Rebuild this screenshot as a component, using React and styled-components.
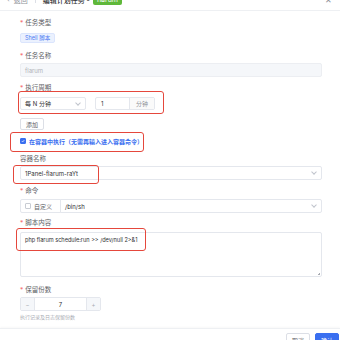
import React from 'react';
import styled, { createGlobalStyle } from 'styled-components';

const GlobalStyle = createGlobalStyle`
  html, body {
    margin: 0;
    padding: 0;
    background: #ffffff;
  }
  body {
    font-family: Inter, "Noto Sans CJK SC", "Liberation Sans", sans-serif;
    color: #303133;
  }
`;

const Drawer = styled.div`
  width: 340px;
  height: 340px;
  overflow: hidden;
  position: relative;
  background: #fff;
`;

const Header = styled.div`
  height: 22px;
  margin-top: -11px;
  box-sizing: border-box;
  border-bottom: 1px solid #eef0f3;
  display: flex;
  align-items: center;
  padding: 0 8px 0 7px;
  font-size: 7px;
`;

const Back = styled.span`
  color: #909399;
  display: flex;
  align-items: center;
  gap: 4px;
`;

const Divider = styled.span`
  width: 1px;
  height: 7px;
  background: #dcdfe6;
  margin: 0 7px;
`;

const Title = styled.span`
  color: #303133;
  font-weight: 500;
`;

const GreenTag = styled.span`
  margin-left: 3px;
  background: #5fb83a;
  color: #fff;
  border-radius: 2px;
  padding: 1px 4px;
  font-size: 7px;
`;

const Close = styled.span`
  margin-left: auto;
  color: #909399;
  font-size: 8px;
`;

const Body = styled.div`
  position: relative;
  padding: 8px 18px 0 20px;
  height: 317px;
  box-sizing: border-box;
`;

const Label = styled.div`
  height: 8px;
  line-height: 8px;
  font-size: 6.5px;
  color: #606266;
  margin-top: ${p => p.$mt || 0}px;
  &::before {
    content: ${p => (p.$req ? '"*"' : '""')};
    color: #f56c6c;
    margin-right: ${p => (p.$req ? 2 : 0)}px;
  }
`;

const TypeTag = styled.div`
  display: flex;
  width: fit-content;
  align-items: center;
  height: 10px;
  box-sizing: border-box;
  margin-top: 6px;
  padding: 0 4px;
  border-radius: 2px;
  background: #ebf1fe;
  border: 1px solid #dbe5fd;
  color: #4d7bf3;
  font-size: 5.5px;
`;

const Input = styled.div`
  height: ${p => p.$h || 14}px;
  margin-top: ${p => p.$mt ?? 3}px;
  box-sizing: border-box;
  border: 1px solid ${p => (p.$disabled ? '#eceef2' : '#e4e7ed')};
  border-radius: ${p => (p.$joined ? '0 2px 2px 0' : '2px')};
  background: ${p => (p.$disabled ? '#f5f7fa' : '#fff')};
  color: ${p => (p.$disabled ? '#b0b3b8' : '#303133')};
  font-size: 6px;
  display: flex;
  align-items: center;
  padding: 0 5px 0 4px;
  width: ${p => (p.$w ? `${p.$w}px` : 'auto')};
  flex: ${p => (p.$grow ? 1 : 'none')};
`;

const Chevron = styled.span`
  margin-left: auto;
  width: 3px;
  height: 3px;
  border-right: 1px solid #c0c4cc;
  border-bottom: 1px solid #c0c4cc;
  transform: translateY(-1px) rotate(45deg);
`;

const Row = styled.div`
  display: flex;
  align-items: center;
  gap: ${p => p.$gap || 0}px;
  margin-top: ${p => p.$mt || 0}px;
`;

const NumGroup = styled.div`
  display: flex;
  height: 13px;
  width: 60px;
  box-sizing: border-box;
  border: 1px solid #e4e7ed;
  border-radius: 2px;
  font-size: 6px;
`;

const NumValue = styled.div`
  flex: 1;
  display: flex;
  align-items: center;
  padding-left: 5px;
  color: #303133;
`;

const Addon = styled.div`
  width: 24px;
  border-left: 1px solid #e4e7ed;
  background: #fafafa;
  color: #909399;
  display: flex;
  align-items: center;
  justify-content: center;
`;

const Button = styled.button`
  display: flex;
  align-items: center;
  justify-content: center;
  box-sizing: border-box;
  height: ${p => p.$h || 12}px;
  min-width: ${p => p.$minw || 0}px;
  padding: 0 5px;
  font-size: 6px;
  font-family: inherit;
  border-radius: 2px;
  border: 1px solid ${p => (p.$primary ? '#3a6ff0' : '#dcdfe6')};
  background: ${p => (p.$primary ? '#3a6ff0' : '#fff')};
  color: ${p => (p.$primary ? '#fff' : '#606266')};
  margin-top: ${p => p.$mt || 0}px;
`;

const CheckRow = styled.div`
  display: flex;
  align-items: center;
  gap: 3px;
  height: 18px;
  margin-top: 2px;
  color: #3a6ff0;
  font-size: 6px;
  font-weight: 600;
`;

const Check = styled.span`
  width: 6px;
  height: 6px;
  box-sizing: border-box;
  border-radius: 1px;
  border: 1px solid ${p => (p.$on ? '#3a6ff0' : '#c8ccd3')};
  background: ${p => (p.$on ? '#3a6ff0' : '#fff')};
  display: inline-flex;
  align-items: center;
  justify-content: center;
`;

const CustomBox = styled.div`
  width: 41px;
  height: 14px;
  box-sizing: border-box;
  border: 1px solid #e4e7ed;
  border-radius: 2px 0 0 2px;
  margin-right: -1px;
  display: flex;
  align-items: center;
  gap: 3px;
  padding-left: 4px;
  font-size: 6px;
  color: #606266;
`;

const TextArea = styled.div`
  height: 45px;
  margin-top: 5px;
  box-sizing: border-box;
  border: 1px solid #e4e7ed;
  border-radius: 2px;
  padding: 3px 4px;
  line-height: 8px;
  font-size: 5.6px;
  color: #303133;
  position: relative;
  &::after {
    content: '';
    position: absolute;
    right: 1px;
    bottom: 1px;
    width: 3px;
    height: 3px;
    background: linear-gradient(135deg, transparent 50%, #a8abb2 50%);
  }
`;

const Stepper = styled.div`
  display: flex;
  width: 81px;
  height: 14px;
  margin-top: 3px;
  box-sizing: border-box;
  border: 1px solid #e4e7ed;
  border-radius: 2px;
  font-size: 6px;
`;

const StepBtn = styled.div`
  width: 13px;
  background: #f5f7fa;
  color: #a8abb2;
  display: flex;
  align-items: center;
  justify-content: center;
  ${p => (p.$side === 'left' ? 'border-right: 1px solid #e4e7ed;' : 'border-left: 1px solid #e4e7ed;')}
`;

const StepValue = styled.div`
  flex: 1;
  display: flex;
  align-items: center;
  justify-content: center;
  color: #303133;
`;

const Help = styled.div`
  font-size: 5px;
  color: #a8abb2;
  margin-top: 2px;
  height: 8px;
  line-height: 8px;
`;

const Footer = styled.div`
  border-top: 1px solid #eef0f3;
  box-shadow: 0 -1px 2px rgba(0, 0, 0, 0.03);
  display: flex;
  justify-content: flex-end;
  gap: 5px;
  padding: 4px 1px 0 0;
`;

const Mark = styled.div`
  position: absolute;
  border: 1.5px solid #e5473c;
  border-radius: 3px;
  pointer-events: none;
`;

// annotation boxes, in page coordinates
const marks = [
  { left: 18, top: 91, width: 144, height: 21 },
  { left: 10, top: 132, width: 132, height: 18 },
  { left: 13, top: 165, width: 84, height: 17 },
  { left: 16, top: 228, width: 128, height: 21 },
];

function CheckIcon() {
  return (
    <svg width="4" height="4" viewBox="0 0 10 10">
      <path d="M2 5.2 L4.2 7.4 L8.2 2.8" fill="none" stroke="#fff" strokeWidth="1.8" />
    </svg>
  );
}

export default function App() {
  return (
    <>
      <GlobalStyle />
      <Drawer>
        <Header>
          <Back>
            <span>‹</span>
            <span>返回</span>
          </Back>
          <Divider />
          <Title>编辑计划任务 -</Title>
          <GreenTag>flarum</GreenTag>
          <Close>✕</Close>
        </Header>
        <Body>
          <Label $req>任务类型</Label>
          <TypeTag>Shell 脚本</TypeTag>

          <Label $req $mt={9}>任务名称</Label>
          <Input $disabled>flarum</Input>

          <Label $req $mt={7}>执行周期</Label>
          <Row $gap={9} $mt={5}>
            <Input $w={66} $h={13} $mt={0}>
              每 N 分钟
              <Chevron />
            </Input>
            <NumGroup>
              <NumValue>1</NumValue>
              <Addon>分钟</Addon>
            </NumGroup>
          </Row>
          <Button $mt={8}>添加</Button>

          <CheckRow>
            <Check $on>
              <CheckIcon />
            </Check>
            在容器中执行（无需再输入进入容器命令）
          </CheckRow>

          <Label $mt={5}>容器名称</Label>
          <Input $mt={3}>
            1Panel-flarum-raYt
            <Chevron />
          </Input>

          <Label $req $mt={7}>命令</Label>
          <Row $mt={4}>
            <CustomBox>
              <Check />
              自定义
            </CustomBox>
            <Input $grow $joined $mt={0}>
              /bin/sh
              <Chevron />
            </Input>
          </Row>

          <Label $req $mt={6}>脚本内容</Label>
          <TextArea>php flarum schedule:run &gt;&gt; /dev/null 2&gt;&amp;1</TextArea>

          <Label $req $mt={9}>保留份数</Label>
          <Stepper>
            <StepBtn $side="left">−</StepBtn>
            <StepValue>7</StepValue>
            <StepBtn $side="right">+</StepBtn>
          </Stepper>
          <Help>执行记录及日志保留份数</Help>

          {marks.map((m, i) => (
            <Mark key={i} style={{ left: m.left, top: m.top - 11, width: m.width, height: m.height }} />
          ))}
        </Body>
        <Footer>
          <Button $h={14} $minw={24}>取消</Button>
          <Button $h={14} $minw={24} $primary>确认</Button>
        </Footer>
      </Drawer>
    </>
  );
}
